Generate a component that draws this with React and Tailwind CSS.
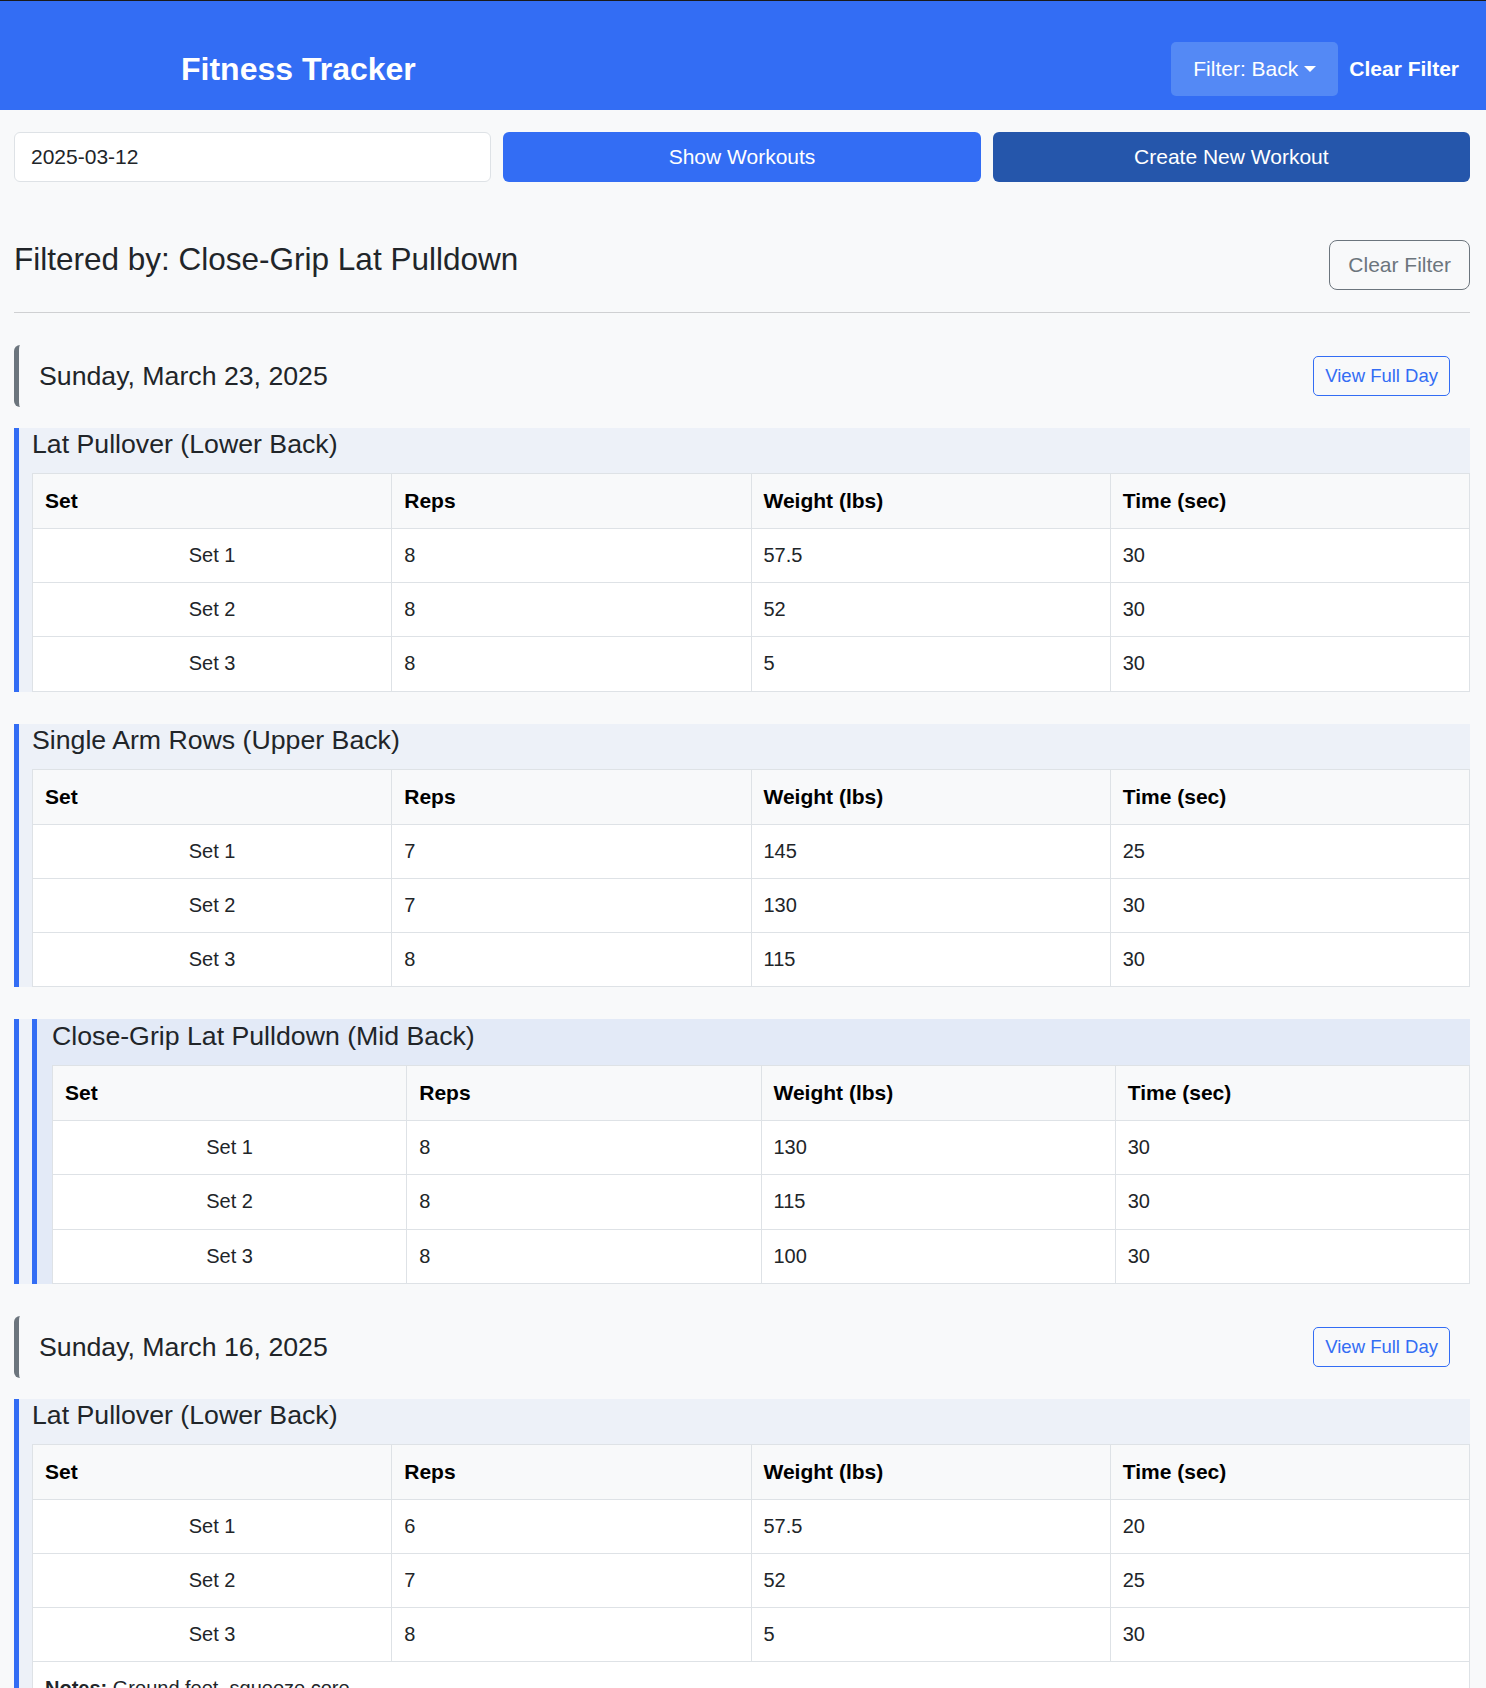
import React from "react"

const days = [
  {
    date: "Sunday, March 23, 2025",
    exercises: [
      { name: "Lat Pullover (Lower Back)", sets: [[8, 57.5, 30], [8, 52, 30], [8, 5, 30]] },
      { name: "Single Arm Rows (Upper Back)", sets: [[7, 145, 25], [7, 130, 30], [8, 115, 30]] },
      { name: "Close-Grip Lat Pulldown (Mid Back)", sets: [[8, 130, 30], [8, 115, 30], [8, 100, 30]], match: true },
    ],
  },
  {
    date: "Sunday, March 16, 2025",
    exercises: [
      {
        name: "Lat Pullover (Lower Back)",
        sets: [[6, 57.5, 20], [7, 52, 25], [8, 5, 30]],
        notes: "Ground feet, squeeze core",
      },
      { name: "Close-Grip Lat Pulldown (Mid Back)", sets: [[8, 125, 30], [8, 110, 30], [8, 100, 30]], match: true },
    ],
  },
]

const headers = ["Set", "Reps", "Weight (lbs)", "Time (sec)"]

const SetTable = ({ sets, notes }) => (
  <table className="w-full table-fixed border-collapse bg-white text-[20px] leading-[29.2px] text-[#212529]">
    <thead>
      <tr className="bg-[#f8f9fa]">
        {headers.map((h) => (
          <th key={h} className="border border-[#dee2e6] px-3 py-3 text-left text-[21px] font-bold leading-[30px] text-black">
            {h}
          </th>
        ))}
      </tr>
    </thead>
    <tbody>
      {sets.map((s, i) => (
        <tr key={i}>
          <td className="border border-[#dee2e6] px-3 py-3 text-center">Set {i + 1}</td>
          <td className="border border-[#dee2e6] px-3 py-3">{s[0]}</td>
          <td className="border border-[#dee2e6] px-3 py-3">{s[1]}</td>
          <td className="border border-[#dee2e6] px-3 py-3">{s[2]}</td>
        </tr>
      ))}
      {notes && (
        <tr>
          <td colSpan={4} className="border border-[#dee2e6] px-3 py-3">
            <strong className="font-bold">Notes:</strong> {notes}
          </td>
        </tr>
      )}
    </tbody>
  </table>
)

const ExerciseBlock = ({ ex }) => {
  if (ex.match) {
    return (
      <div className="border-l-[5px] border-[#336df4] bg-[#eef2f9] pl-[13px]">
        <div className="border-l-[5px] border-[#336df4] bg-[#e3eaf7] pl-[15px] pt-px">
          <h4 className="mb-[13px] text-[26.7px] leading-8 text-[#212529]">{ex.name}</h4>
          <SetTable sets={ex.sets} notes={ex.notes} />
        </div>
      </div>
    )
  }
  return (
    <div className="border-l-[5px] border-[#336df4] bg-[#edf1f8] pl-[13px]">
      <h4 className="mb-[13px] text-[26.7px] leading-8 text-[#212529]">{ex.name}</h4>
      <SetTable sets={ex.sets} notes={ex.notes} />
    </div>
  )
}

const DaySection = ({ day }) => (
  <div>
    <div className="flex h-[62px] items-center justify-between rounded-md border-l-[5px] border-[#6c757d] px-5">
      <h3 className="text-[26.7px] leading-8 text-[#212529]">{day.date}</h3>
      <button className="h-10 rounded-[5px] border border-[#336df4] px-[11px] text-[18.5px] text-[#336df4]">
        View Full Day
      </button>
    </div>
    <div className="mt-[21px] flex flex-col gap-8">
      {day.exercises.map((ex, i) => (
        <ExerciseBlock key={i} ex={ex} />
      ))}
    </div>
  </div>
)

export default function App() {
  return (
    <div className="min-h-screen bg-[#f8f9fa] font-['Liberation_Sans',Arial,sans-serif] text-[#212529]">
      {/* Navbar */}
      <header className="flex h-[110px] items-center border-t border-[#1a1a1a] bg-[#336df4] pl-[181px] pr-[27px] pt-[27px]">
        <h1 className="text-[32px] font-bold leading-10 text-white">Fitness Tracker</h1>
        <div className="ml-auto flex items-center gap-[11px]">
          <button className="flex h-[54px] items-center rounded-[5px] bg-[#5489f5] px-[22px] text-[21px] text-white">
            Filter: Back
            <span className="ml-[6px] inline-block h-0 w-0 border-x-[6px] border-t-[6px] border-x-transparent border-t-white" />
          </button>
          <button className="text-[21px] font-bold text-white">Clear Filter</button>
        </div>
      </header>

      <main className="pl-[14px] pr-[16px] pt-[22px] pb-10">
        {/* Controls */}
        <div className="grid grid-cols-3 gap-3">
          <input
            type="text"
            defaultValue="2025-03-12"
            className="h-[50px] rounded-md border border-[#dee2e6] bg-white px-4 text-[21px] text-[#212529] outline-none"
          />
          <button className="h-[50px] rounded-md bg-[#336df4] text-[21px] text-white">Show Workouts</button>
          <button className="h-[50px] rounded-md bg-[#2556ab] text-[21px] text-white">Create New Workout</button>
        </div>

        {/* Filter heading */}
        <div className="mt-[58px] flex items-start justify-between">
          <h2 className="text-[31.5px] leading-[38px] text-[#212529]">Filtered by: Close-Grip Lat Pulldown</h2>
          <button className="h-[50px] rounded-lg border border-[#6c757d] px-[18px] text-[21px] text-[#6c757d]">
            Clear Filter
          </button>
        </div>
        <hr className="mt-[22px] border-t border-[#cfd0d2]" />

        <div className="mt-8 flex flex-col gap-8">
          {days.map((day) => (
            <DaySection key={day.date} day={day} />
          ))}
        </div>
      </main>
    </div>
  )
}
